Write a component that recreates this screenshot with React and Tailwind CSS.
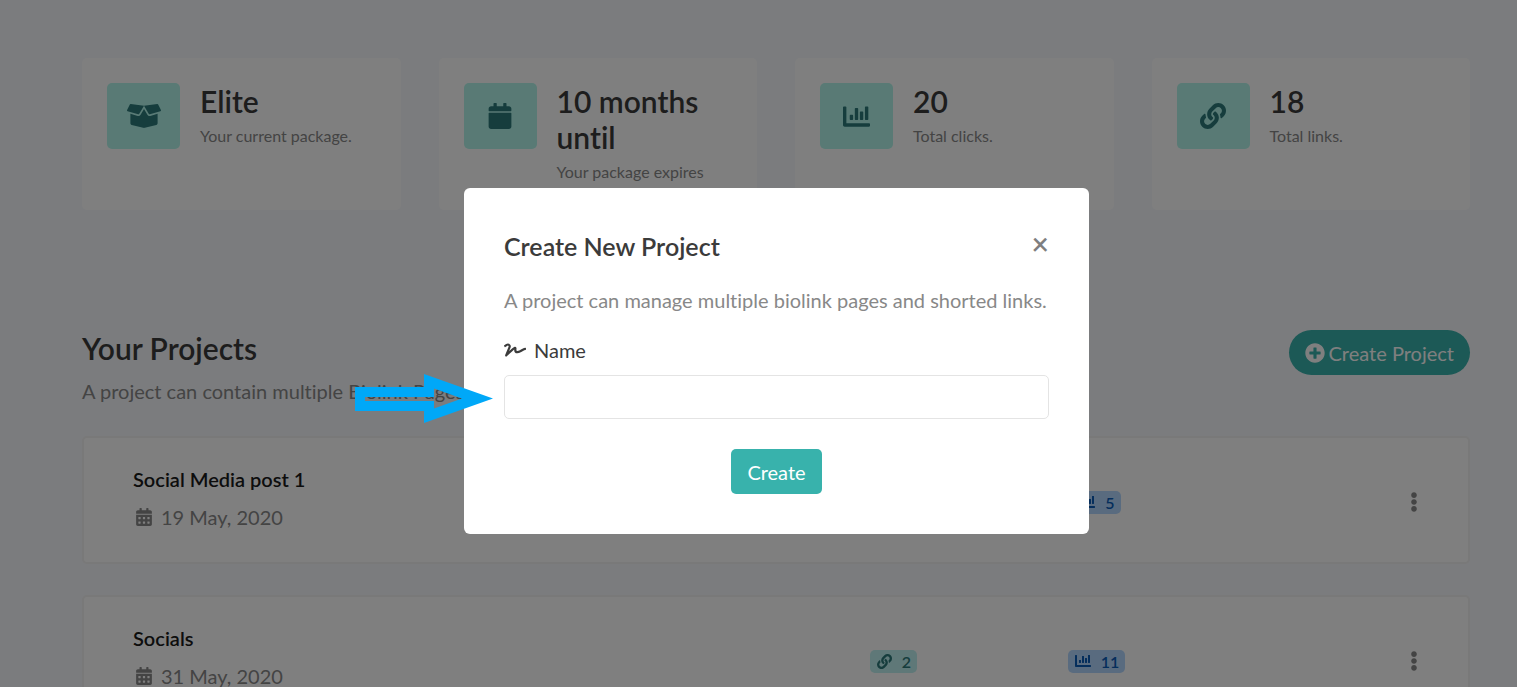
import React from 'react'
import { useState } from "react";
import {
  FaBoxOpen,
  FaCalendar,
  FaCalendarAlt,
  FaChartBar,
  FaEllipsisV,
  FaLink,
  FaPlusCircle,
  FaSignature,
} from "react-icons/fa";

const stats = [
  { icon: <FaBoxOpen size={34} />, title: "Elite", text: "Your current package." },
  { icon: <FaCalendar size={26} />, title: "10 months until", text: "Your package expires" },
  { icon: <FaChartBar size={27} />, title: "20", text: "Total clicks." },
  { icon: <FaLink size={26} />, title: "18", text: "Total links." },
];

const projects = [
  { name: "Social Media post 1", date: "19 May, 2020", links: 3, clicks: 5 },
  { name: "Socials", date: "31 May, 2020", links: 2, clicks: 11 },
];

function StatCard({ icon, title, text }) {
  return (
    <div className="flex items-start gap-5 rounded-[5px] bg-white p-[25px] pb-[26px]">
      <div className="flex h-[66px] w-[73px] shrink-0 items-center justify-center rounded-[5px] bg-[#b2f5ea] text-[#2c7a7b]">
        {icon}
      </div>
      <div>
        <h2 className="text-[30px] leading-9 font-semibold">{title}</h2>
        <p className="mt-[5px] text-base text-[#888888]">{text}</p>
      </div>
    </div>
  );
}

function ProjectRow({ project }) {
  return (
    <li className="grid grid-cols-[51%_204px_202px_1fr] items-center rounded-[5px] border-2 border-[#f2f2f2] bg-white pt-[26px] pr-11 pb-[22px] pl-[49px]">
      <div className="pb-2">
        <h3 className="leading-[30px] font-semibold text-[#1a1a1a]">{project.name}</h3>
        <p className="mt-2 flex items-center gap-1.5 leading-[30px] text-[#888888]">
          <span className="flex w-[22px] justify-center">
            <FaCalendarAlt size={18} />
          </span>
          {project.date}
        </p>
      </div>
      <div className="flex justify-center">
        <span className="flex items-center gap-2.5 rounded-[5px] bg-[#bef0f0] pr-1.5 pl-[7px] text-base leading-[23px] font-semibold text-[#2c7a7b]">
          <FaLink size={15} />
          {project.links}
        </span>
      </div>
      <div className="flex justify-center">
        <span className="flex items-center gap-2.5 rounded-[5px] bg-[#b3d7ff] pr-1.5 pl-[7px] text-base leading-[23px] font-semibold text-[#0a5cb8]">
          <FaChartBar size={16} />
          {project.clicks}
        </span>
      </div>
      <button
        type="button"
        aria-label="Project options"
        className="justify-self-end text-[#888888]"
      >
        <FaEllipsisV size={20} />
      </button>
    </li>
  );
}

function CreateProjectModal({ onClose }) {
  const [name, setName] = useState("");

  const handleSubmit = (e) => {
    e.preventDefault();
    onClose();
  };

  return (
    <div className="fixed inset-0 flex items-start justify-center bg-black/50 pt-[188px] pl-9">
      <div
        role="dialog"
        aria-labelledby="modal-title"
        className="relative w-full max-w-[625px] rounded-md bg-white p-10"
      >
        <div className="flex items-start justify-between">
          <h2 id="modal-title" className="text-[25px] leading-9 font-semibold">
            Create New Project
          </h2>
          <button
            type="button"
            aria-label="Close"
            onClick={onClose}
            className="text-[30px] leading-[30px] font-semibold text-[#7f7f7f]"
          >
            ×
          </button>
        </div>
        <p className="mt-[21px] leading-[30px] text-[#888888]">
          A project can manage multiple biolink pages and shorted links.
        </p>

        <form onSubmit={handleSubmit} className="mt-5">
          <label htmlFor="name" className="flex items-center gap-2 leading-[30px]">
            <FaSignature size={22} />
            Name
          </label>
          <input
            id="name"
            type="text"
            value={name}
            onChange={(e) => setName(e.target.value)}
            className="mt-2.5 block h-11 w-full rounded-[5px] border border-[#e4e4e4] px-4 outline-none"
          />
          <button
            type="submit"
            className="mx-auto mt-[30px] block h-[45px] rounded-[5px] bg-[#38b2ac] px-4 text-white"
          >
            Create
          </button>
        </form>

        {/* Arrow pointing at the name field */}
        <svg
          viewBox="0 0 138 50"
          className="pointer-events-none absolute top-[186px] -left-[109px] h-[50px] w-[138px]"
          fill="#00a8f8"
          fillRule="evenodd"
        >
          <path d="M0 13H69V0L138 24.5L69 49V37H0ZM10 23V27H79V34.5L107 24.5L79 14.5V23Z" />
        </svg>
      </div>
    </div>
  );
}

export default function App() {
  const [open, setOpen] = useState(true);

  return (
    <div className="h-screen overflow-hidden bg-[#f7f8fc] pl-9 font-[Lato,sans-serif] text-xl text-[#3b3b3b] [font-variant-ligatures:none]">
      <main className="pt-[58px] pr-[47px] pl-[46px]">
        <section className="grid grid-cols-4 gap-[38px]">
          {stats.map((stat) => (
            <StatCard key={stat.title} {...stat} />
          ))}
        </section>

        <section className="mt-[120px]">
          <div className="flex items-start justify-between">
            <div>
              <h1 className="text-[30px] leading-9 font-semibold">Your Projects</h1>
              <p className="mt-2.5 leading-[30px] text-[#888888]">
                A project can contain multiple Biolink Pages
              </p>
            </div>
            <button
              type="button"
              onClick={() => setOpen(true)}
              className="flex h-[45px] items-center gap-1 rounded-full bg-[#38b2ac] px-4 text-white"
            >
              <FaPlusCircle size={20} />
              Create Project
            </button>
          </div>

          <ul className="mt-[30px] space-y-[31px]">
            {projects.map((project) => (
              <ProjectRow key={project.name} project={project} />
            ))}
          </ul>
        </section>
      </main>

      {open && <CreateProjectModal onClose={() => setOpen(false)} />}
    </div>
  );
}
